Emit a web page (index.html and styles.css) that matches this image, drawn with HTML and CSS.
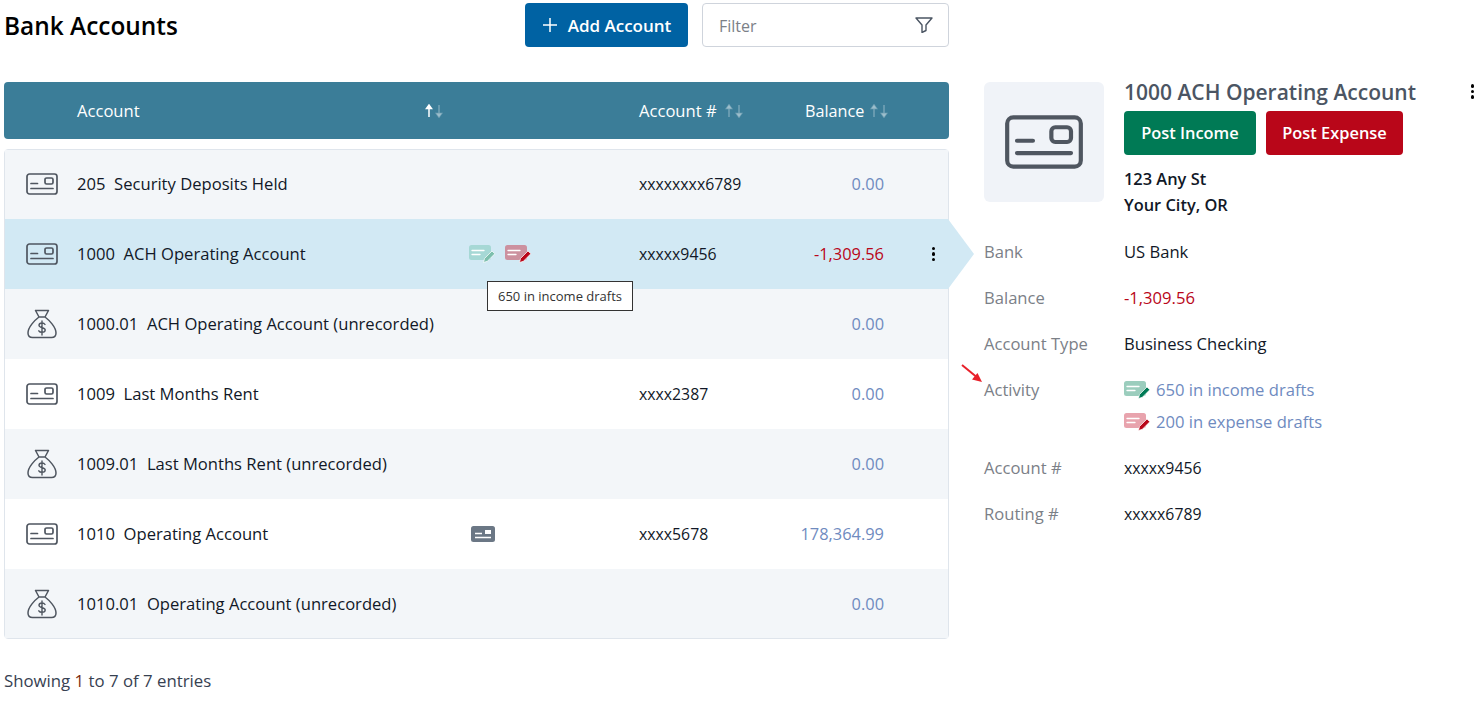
FILE: index.html
```html
<!DOCTYPE html>
<html lang="en">
<head>
<meta charset="utf-8">
<title>Bank Accounts</title>
<link rel="stylesheet" href="styles.css">
</head>
<body>
<svg class="defs" width="0" height="0" aria-hidden="true">
  <defs>
    <symbol id="card" viewBox="0 0 32 22">
      <rect x="1" y="1" width="30" height="20" rx="2.5" fill="none" stroke="currentColor" stroke-width="1.7"/>
      <path d="M5 10.500h6.500M5 15.500h22" fill="none" stroke="currentColor" stroke-width="1.700" stroke-linecap="round"/>
      <rect x="19" y="5" width="8" height="6" rx="1.600" fill="none" stroke="currentColor" stroke-width="1.700"/>
    </symbol>
    <symbol id="bag" viewBox="0 0 30 30">
      <path d="M8.500 1.500h13l-3.500 6.500h-6z M12 8C8 11 1 18 1 24c0 3 2 4.500 4.500 4.500h19c2.500 0 4.500-1.500 4.500-4.500 0-6-7-13-11-16" fill="none" stroke="currentColor" stroke-width="1.500" stroke-linejoin="round"/>
      <path d="M18 15.500c-.6-1-1.700-1.500-3-1.500-1.800 0-3 .9-3 2.300 0 3.200 6.200 1.700 6.200 4.700 0 1.500-1.400 2.300-3.200 2.300-1.400 0-2.600-.5-3.200-1.500M15 12v14" fill="none" stroke="currentColor" stroke-width="1.400" stroke-linecap="round"/>
    </symbol>
    <symbol id="draft" viewBox="0 0 26 18">
      <rect x="0" y="0" width="22" height="15" rx="2.500" fill="var(--sheet)"/>
      <path d="M3 5.500h12M3 9.500h8" stroke="#fff" stroke-width="1.300" fill="none" stroke-linecap="round"/>
      <path d="M14.500 17.500l1-4 7.500-7.500 2.800 2.800-7.500 7.500z" fill="var(--pen)" stroke="#fff" stroke-width=".7" stroke-linejoin="round"/>
    </symbol>
    <symbol id="sort" viewBox="0 0 18 14">
      <path d="M4 13V2.500M1.500 4.500L4 1l2.500 3.500z" stroke="var(--up, currentColor)" stroke-width="1.500" fill="var(--up, currentColor)"/>
      <path d="M14 1v10.500M11.500 9.500L14 13l2.500-3.500z" stroke="currentColor" stroke-width="1.500" fill="currentColor"/>
    </symbol>
  </defs>
</svg>

<header class="topbar">
  <h1 class="page-title">Bank Accounts</h1>
  <a class="btn btn-add"><svg class="plus" viewBox="0 0 16 16"><path d="M8 1v14M1 8h14" stroke="currentColor" stroke-width="1.500" fill="none"/></svg><span class="btn-label">Add Account</span></a>
  <div class="filter">
    <span class="filter-text">Filter</span>
    <svg class="filter-icon" viewBox="0 0 18 16"><path d="M1 1h16l-6 7v5.500l-4 2V8z" fill="none" stroke="#4b5563" stroke-width="1.400" stroke-linejoin="round"/></svg>
  </div>
</header>

<main class="layout">
  <section class="list">
    <div class="thead">
      <div class="th th-account">Account
        <svg class="sort sort-up"><use href="#sort"/></svg>
      </div>
      <div class="th th-number">Account #
        <svg class="sort"><use href="#sort"/></svg>
      </div>
      <div class="th th-balance">Balance
        <svg class="sort"><use href="#sort"/></svg>
      </div>
    </div>

    <div class="tbody">
      <div class="row alt">
        <svg class="row-icon"><use href="#card"/></svg>
        <div class="name">205&nbsp; Security Deposits Held</div>
        <div class="flags"></div>
        <div class="number">xxxxxxxx6789</div>
        <div class="amount">0.00</div>
        <div class="more"></div>
      </div>
      <div class="row selected">
        <svg class="row-icon"><use href="#card"/></svg>
        <div class="name">1000&nbsp; ACH Operating Account</div>
        <div class="flags">
          <svg class="flag income soft"><use href="#draft"/></svg>
          <svg class="flag expense soft"><use href="#draft"/></svg>
          <div class="tooltip">650 in income drafts</div>
        </div>
        <div class="number">xxxxx9456</div>
        <div class="amount negative">-1,309.56</div>
        <div class="more"><span class="kebab"><b></b><b></b><b></b></span></div>
      </div>
      <div class="row alt">
        <svg class="row-icon bag"><use href="#bag"/></svg>
        <div class="name">1000.01&nbsp; ACH Operating Account (unrecorded)</div>
        <div class="flags"></div>
        <div class="number"></div>
        <div class="amount">0.00</div>
        <div class="more"></div>
      </div>
      <div class="row">
        <svg class="row-icon"><use href="#card"/></svg>
        <div class="name">1009&nbsp; Last Months Rent</div>
        <div class="flags"></div>
        <div class="number">xxxx2387</div>
        <div class="amount">0.00</div>
        <div class="more"></div>
      </div>
      <div class="row alt">
        <svg class="row-icon bag"><use href="#bag"/></svg>
        <div class="name">1009.01&nbsp; Last Months Rent (unrecorded)</div>
        <div class="flags"></div>
        <div class="number"></div>
        <div class="amount">0.00</div>
        <div class="more"></div>
      </div>
      <div class="row">
        <svg class="row-icon"><use href="#card"/></svg>
        <div class="name">1010&nbsp; Operating Account</div>
        <div class="flags">
          <svg class="mini-card" viewBox="0 0 24 16"><rect width="24" height="16" rx="2.500" fill="#6b7785"/><path d="M4 7.500h7M4 11.500h16" stroke="#fff" stroke-width="1.300"/><rect x="14" y="4" width="6" height="4" fill="#fff"/></svg>
        </div>
        <div class="number">xxxx5678</div>
        <div class="amount">178,364.99</div>
        <div class="more"></div>
      </div>
      <div class="row alt">
        <svg class="row-icon bag"><use href="#bag"/></svg>
        <div class="name">1010.01&nbsp; Operating Account (unrecorded)</div>
        <div class="flags"></div>
        <div class="number"></div>
        <div class="amount">0.00</div>
        <div class="more"></div>
      </div>
    </div>

    <p class="entries">Showing <span class="hl">1</span> to 7 of 7 entries</p>
  </section>

  <aside class="detail">
    <div class="detail-head">
      <div class="tile"><svg class="tile-icon"><use href="#card"/></svg></div>
      <div class="head-body">
        <div class="title-row">
          <h2 class="detail-title">1000 ACH Operating Account</h2>
          <span class="kebab"><b></b><b></b><b></b></span>
        </div>
        <div class="actions">
          <a class="btn btn-income">Post Income</a>
          <a class="btn btn-expense">Post Expense</a>
        </div>
        <address class="address">123 Any St<br>Your City, OR</address>
      </div>
    </div>

    <dl class="facts">
      <dt>Bank</dt><dd>US Bank</dd>
      <dt>Balance</dt><dd class="negative">-1,309.56</dd>
      <dt>Account Type</dt><dd>Business Checking</dd>
      <dt class="activity">Activity
        <svg class="red-arrow" viewBox="0 0 22 20"><path d="M1 1L15 12.500" stroke="#e8202a" stroke-width="2" fill="none"/><path d="M21 18l-10-2.500 5.500-6.500z" fill="#e8202a"/></svg>
      </dt>
      <dd class="links">
        <a class="draft-link"><svg class="flag income"><use href="#draft"/></svg>650 in income drafts</a>
        <a class="draft-link"><svg class="flag expense"><use href="#draft"/></svg>200 in expense drafts</a>
      </dd>
      <dt>Account #</dt><dd class="masked">xxxxx9456</dd>
      <dt>Routing #</dt><dd class="masked">xxxxx6789</dd>
    </dl>
  </aside>
</main>
</body>
</html>
```

FILE: styles.css
```css
* { box-sizing: border-box; }
html, body { margin: 0; padding: 0; }
body {
  font-family: "Open Sans", "Noto Sans", sans-serif;
  font-size: 16.6px;
  line-height: 24px;
  color: #111827;
  background: #fff;
  padding: 3px 0 0 4px;
  height: 705px;
  overflow: hidden;
}
.defs { position: absolute; }

.topbar { display: flex; align-items: center; width: 945px; height: 44px; }
.page-title { margin: 0; flex: 0 0 521px; padding-top: 2px; font-size: 24.4px; line-height: 46px; font-weight: 600; color: #000; }
.btn { display: inline-flex; align-items: center; justify-content: center; height: 44px; border-radius: 4px; color: #fff; font-weight: 600; font-size: 16.4px; }
.btn-add { width: 163px; background: #0062a3; }
.btn-label { font-size: 17px; padding-top: 2px; }
.plus { width: 16px; height: 16px; margin-right: 10px; }
.filter { margin-left: 14px; flex: 1; height: 44px; border: 1px solid #cfd4dc; border-radius: 4px; display: flex; align-items: center; justify-content: space-between; padding: 2px 15px 0 16px; }
.filter-text { color: #7b8087; font-size: 16px; }
.filter-icon { width: 18px; height: 16px; margin-top: -2px; }

.layout { display: flex; margin-top: 35px; }
.list { flex: 0 0 945px; }

.thead { display: flex; align-items: center; height: 57px; background: #3b7d98; border-radius: 4px; color: #fff; padding-left: 73px; }
.th { display: flex; align-items: center; }
.th-account { flex: 0 0 366px; justify-content: space-between; }
.th-number { flex: 0 0 166px; margin-left: 196px; }
.th-number .sort { margin-left: 8px; }
.th-balance { font-size: 16.2px; }
.th-balance .sort { margin-left: 6px; }
.sort { width: 18px; height: 14px; color: rgba(255,255,255,.3); }
.sort-up { --up: #fff; }

.tbody { margin-top: 10px; border: 1px solid #dfe5ec; border-radius: 4px; }
.row { display: grid; grid-template-columns: 72px 391px 171px 1fr 100px 64px; align-items: center; height: 70px; position: relative; }
.row:first-child { height: 69px; padding-bottom: 1px; }
.row:last-child { height: 69px; }
.row.alt { background: #f3f6f9; }
.row.selected { background: #d2e9f4; }
.row.selected::after { content: ""; position: absolute; left: 943px; top: 0; width: 26px; height: 70px; background: #d2e9f4; clip-path: polygon(0 0, 100% 50%, 0 100%); }
.row-icon { width: 32px; height: 22px; margin-left: 21px; color: #4f5660; }
.row-icon.bag { height: 30px; }
.name { white-space: nowrap; }
.number { font-size: 15.8px; white-space: nowrap; }
.flags { display: flex; align-items: center; gap: 10px; position: relative; padding-left: 1px; }
.flag { width: 26px; height: 18px; flex: none; }
.flag.income { --sheet: #9bcdbd; --pen: #007a55; }
.flag.expense { --sheet: #e8a3ad; --pen: #b90619; }
.flag.income.soft { --sheet: #a6d8d5; --pen: #7dbfad; }
.flag.expense.soft { --sheet: #cc919f; --pen: #b90619; }
.mini-card { width: 24px; height: 16px; margin-left: 2px; }
.amount { grid-column: 5; text-align: right; color: #6f8bbf; font-size: 16.4px; }
.negative, .amount.negative { color: #b90619; }
.more { display: flex; justify-content: flex-end; padding-right: 13px; }
.kebab { display: inline-flex; flex-direction: column; gap: 2px; }
.kebab b { display: block; width: 3.500px; height: 3.500px; border-radius: 50%; background: #000; }

.tooltip { position: absolute; left: 19px; top: 36px; height: 30px; width: 146px; border: 1px solid #333; background: #fff; font-size: 13px; line-height: 28px; text-align: center; color: #333; white-space: nowrap; z-index: 2; }

.entries { margin: 30px 0 0; color: #374151; font-size: 16.800px; }
.hl { color: #7a2e12; }

.detail { margin-left: 35px; flex: 1; }
.detail-head { display: flex; gap: 20px; }
.tile { flex: 0 0 120px; height: 120px; background: #f0f3f8; border-radius: 6px; display: flex; align-items: center; justify-content: center; }
.tile-icon { width: 80px; height: 54px; color: #4f5660; }
.head-body { flex: 1; padding-right: 10px; }
.title-row { display: flex; justify-content: space-between; align-items: flex-start; height: 29px; }
.detail-title { margin: 0; font-size: 21px; line-height: 21px; font-weight: 600; color: #4b5563; white-space: nowrap; }
.title-row .kebab { margin-top: 2px; }
.actions { display: flex; gap: 10px; }
.btn-income { width: 132px; background: #007a55; }
.btn-expense { width: 137px; background: #b90619; }
.address { margin-top: 11px; font-style: normal; font-weight: 600; line-height: 26px; font-size: 16.4px; }

.facts { margin: 22px 0 0; display: grid; grid-template-columns: 140px 1fr; row-gap: 22px; }
.facts dt { color: #7b8087; }
.facts dd { margin: 0; }
.facts .masked { font-size: 15.800px; }
.activity { position: relative; }
.red-arrow { position: absolute; left: -23px; top: -14px; width: 22px; height: 20px; }
.links { display: flex; flex-direction: column; gap: 8px; }
.draft-link { display: flex; align-items: center; gap: 6px; color: #6f8bbf; }
```
